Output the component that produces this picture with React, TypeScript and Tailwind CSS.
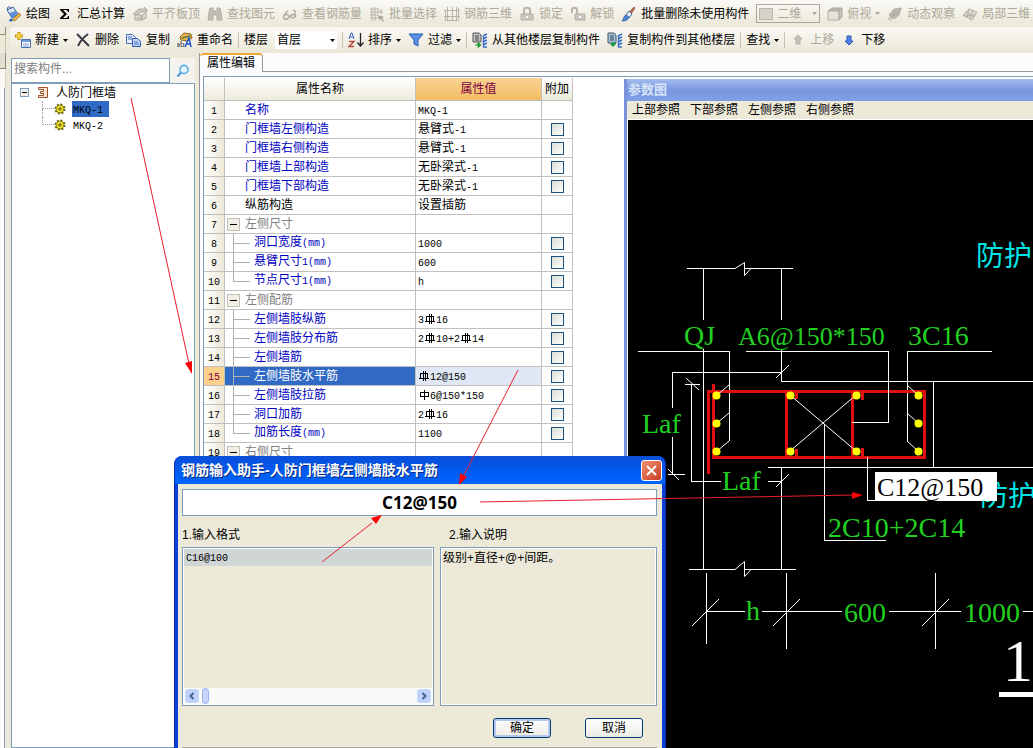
import { Fragment, useState } from 'react'
import type { ReactNode } from 'react'

interface Row {
  name: string
  value: string
  kind: 'plain' | 'dark' | 'group' | 'child'
  last?: boolean
  check?: boolean
}

// {A} and {C} stand for the rebar grade symbols
const ROWS: Row[] = [
  { name: '名称', value: 'MKQ-1', kind: 'plain' },
  { name: '门框墙左侧构造', value: '悬臂式-1', kind: 'plain', check: true },
  { name: '门框墙右侧构造', value: '悬臂式-1', kind: 'plain', check: true },
  { name: '门框墙上部构造', value: '无卧梁式-1', kind: 'plain', check: true },
  { name: '门框墙下部构造', value: '无卧梁式-1', kind: 'plain', check: true },
  { name: '纵筋构造', value: '设置插筋', kind: 'dark' },
  { name: '左侧尺寸', value: '', kind: 'group' },
  { name: '洞口宽度(mm)', value: '1000', kind: 'child', check: true },
  { name: '悬臂尺寸1(mm)', value: '600', kind: 'child', check: true },
  { name: '节点尺寸1(mm)', value: 'h', kind: 'child', check: true, last: true },
  { name: '左侧配筋', value: '', kind: 'group' },
  { name: '左侧墙肢纵筋', value: '3{C}16', kind: 'child', check: true },
  { name: '左侧墙肢分布筋', value: '2{C}10+2{C}14', kind: 'child', check: true },
  { name: '左侧墙筋', value: '', kind: 'child', check: true },
  { name: '左侧墙肢水平筋', value: '{C}12@150', kind: 'child', check: true },
  { name: '左侧墙肢拉筋', value: '{A}6@150*150', kind: 'child', check: true },
  { name: '洞口加筋', value: '2{C}16', kind: 'child', check: true },
  { name: '加筋长度(mm)', value: '1100', kind: 'child', check: true, last: true },
  { name: '右侧尺寸', value: '', kind: 'group' },
]

const NAME_COLOR = {
  plain: 'text-[#0000c0]',
  child: 'text-[#0000c0]',
  dark: 'text-black',
  group: 'text-[#808080]',
}

function Rebar({ grade }: { grade: string }) {
  return (
    <svg width="12" height="12" viewBox="0 0 12 12" className="inline-block align-[-2px]" fill="none" stroke="currentColor" shapeRendering="crispEdges">
      {grade === 'C' ? (
        <path d="M2.5 3.5h7v5h-7zM1 8.5h10M5.5 1v10M7.5 1v10" />
      ) : (
        <path d="M2.5 3.5h8v4h-8zM6.5 1v10" />
      )}
    </svg>
  )
}

function Mixed({ text }: { text: string }) {
  return (
    <>
      {text.split(/(\{[AC]\}|[!-z]+)/).map((part, i) => {
        if (part === '{A}' || part === '{C}') return <Rebar key={i} grade={part[1]} />
        if (/^[!-~]+$/.test(part)) return <span key={i} className="font-['Liberation_Mono',monospace] text-[10px]">{part}</span>
        return <Fragment key={i}>{part}</Fragment>
      })}
    </>
  )
}

function Caret() {
  return (
    <svg width="5" height="3" viewBox="0 0 5 3" fill="currentColor" className="shrink-0">
      <path d="M0 0h5L2.5 3z" />
    </svg>
  )
}

function Tool({ icon, label, off, menu }: { icon?: ReactNode; label: string; off?: boolean; menu?: boolean }) {
  return (
    <button disabled={off} className={`flex items-center gap-1 shrink-0 whitespace-nowrap ${off ? 'text-[#aca899]' : 'text-black'}`}>
      {icon && <svg width="16" height="16" viewBox="0 0 16 16" fill="none" className="shrink-0">{icon}</svg>}
      {label}
      {menu && <Caret />}
    </button>
  )
}

function Sep() {
  return <div className="w-px h-4 -mx-0.5 bg-[#c5c2b2] shrink-0" />
}

const ICONS = {
  paint: (
    <>
      <path d="M1 4l6-3 5 7-6 4z" fill="#dce9f8" stroke="#35589a" />
      <path d="M2 4C0 1 4-1 5 3" stroke="#35589a" />
      <path d="M3 7l7-2 2 3-6 4z" fill="#5d8fd6" />
      <path d="M6 14l7-7 2 2-6 6z" fill="#f0b541" stroke="#8b6d2d" strokeWidth=".7" />
      <path d="M3 15c1-3 3-3 4-1-1 2-3 2-4 1z" fill="#3467b8" />
    </>
  ),
  sigma: <path d="M3 3h9v3h-1c0-1-1-2-2-2H6l4 4-4 4h3c1 0 2-1 2-2h1v3H3v-1l4-4-4-4z" fill="#000" />,
  align: (
    <>
      <path d="M1 8l6-5h8v3H9L5 9z" fill="#c8c6bc" stroke="#b4b1a4" />
      <path d="M3 9h7v5H3zM10 9l4-2v5l-4 2z" fill="#dedcd2" stroke="#aca899" />
      <path d="M5 12h4M12 1l2 2" stroke="#aca899" />
    </>
  ),
  binoculars: (
    <path d="M3 2h3v3h4V2h3l1 4 1 8h-5v-5H6v5H1l1-8z" fill="#c0beb4" stroke="#b4b1a4" />
  ),
  glasses: (
    <path d="M6.500 10c0-2-5-2-5 1s5 3 5 0l2-1c0-2 5-2 5 0s-5 3-5 0M13 10V5l-2-1M2 9l4-4" stroke="#aca899" strokeWidth="1.300" />
  ),
  batch: (
    <>
      <path d="M1 3h9M1 6h13M1 9h8M1 12h8M3 1v14M6 1v14M9 3v5M12 3v5" stroke="#b8b5a8" />
      <path d="M9 9l6 2-2 1 2 3-1 1-2-3-2 1z" fill="#aca899" />
    </>
  ),
  mesh: <path d="M0 4.500h16M0 10.500h16M1 14.500h14M3.500 1v13M8.500 1v13M12.500 1v14M1.500 4v11M14.500 2v11" stroke="#b8b5a8" />,
  lock: (
    <>
      <path d="M5 8V4c0-3 6-3 6 0v4" stroke="#b8b5a8" strokeWidth="2" />
      <path d="M2 8h12v6H2z" fill="#c8c6bc" stroke="#b4b1a4" />
      <path d="M8 10v2" stroke="#fff" strokeWidth="2" />
    </>
  ),
  unlock: (
    <>
      <path d="M2 7V4c0-3 5-3 5 0v4" stroke="#b8b5a8" strokeWidth="2" />
      <path d="M5 8h10v6H5z" fill="#c8c6bc" stroke="#b4b1a4" />
      <path d="M10 10v2" stroke="#fff" strokeWidth="2" />
    </>
  ),
  brush: (
    <>
      <path d="M8 6l5-5 1 1-4 6z" fill="#c46a4a" stroke="#7a3c2c" strokeWidth=".6" />
      <path d="M5 9l3-4 3 3-3 4z" fill="#e5edf8" stroke="#44619c" />
      <path d="M1 15c2-1 1-5 4-6l3 2c-1 3-3 4-7 4z" fill="#4f84d8" stroke="#29509c" strokeWidth=".7" />
    </>
  ),
  cube: (
    <>
      <path d="M1 5l4-3h10l-3 3z" fill="#b8b6ac" stroke="#aca899" />
      <path d="M1 5h11v9H1z" fill="#e4e2da" stroke="#b4b1a4" />
      <path d="M12 5l3-3v9l-3 3z" fill="#c8c6bc" stroke="#aca899" />
    </>
  ),
  orbit: (
    <>
      <path d="M2 9l5-6 7-1-2 7-5 4z" fill="#bdbbb1" stroke="#b4b1a4" />
      <path d="M1 14C1 9 14 10 14 2M3 15l2-4M4 11l6-6" stroke="#aca899" />
    </>
  ),
  local: (
    <>
      <path d="M1 9l6-6 8 3-5 8z" fill="#dddbd2" stroke="#b4b1a4" />
      <path d="M4 6l8 5M7 3L5 12M11 4L8 13M2 10l11-1" stroke="#b4b1a4" />
    </>
  ),
  create: (
    <>
      <path d="M4 0v8M0 4h8" stroke="#c09018" strokeWidth="3" />
      <path d="M4 1v6M1 4h6" stroke="#ffe040" strokeWidth="1.500" />
      <path d="M6.500 7.500h9v8h-9z" fill="#fff" stroke="#4a70b0" />
      <path d="M7 8h8v2H7z" fill="#6f9be0" />
      <path d="M8 12h6M8 14h6" stroke="#7d9cd0" />
    </>
  ),
  remove: <path d="M2 2l12 12M13 2C9 5 5 9 3 14" stroke="#3b3b46" strokeWidth="2" />,
  copy: (
    <>
      <path d="M.5 2.500h6l3 3v6h-9z" fill="#e2ebfb" stroke="#4a6fc0" />
      <path d="M6.500 6.500h5l3 3v5h-8z" fill="#c2d6f8" stroke="#3358b0" />
      <path d="M2 5h4M2 7h4M8 10h4M8 12h5" stroke="#4a6fc0" />
    </>
  ),
  rename: (
    <>
      <path d="M3 5l4-4 7 1 1 4-5 3-6-1z" fill="#eab651" stroke="#8a6420" />
      <path d="M5 6l8-2" stroke="#567a38" strokeWidth="1.500" />
      <text x="-1" y="15" fontSize="9" fill="#222" fontFamily="Liberation Serif">ab</text>
      <path d="M8 15l4-9 2 9M9 12h5" stroke="#2458c8" strokeWidth="1.500" />
    </>
  ),
  sort: (
    <>
      <path d="M1 7l2-6h1l2 6M2 5h3" stroke="#3a62c4" />
      <path d="M1 9.500h5l-5 5h5" stroke="#b8453a" strokeWidth="1.300" />
      <path d="M12.500 1v12M9.500 10.500l3 3.500 3-3.500" stroke="#222" strokeWidth="1.300" />
    </>
  ),
  filter: (
    <path d="M1 2h14L10 8v6l-4-2V8z" fill="#5b92e8" stroke="#2c5cb4" />
  ),
  fromFloor: (
    <>
      <path d="M1 1h6l2 2v7H1z" fill="#c4c4c4" stroke="#555" />
      <path d="M3 4h4M3 6h4M3 8h4" stroke="#444" />
      <path d="M3 13h4M6 10.500l3 2.500-3 2.500z" stroke="#1f9a3a" fill="#1f9a3a" />
      <path d="M11 4l4-2M11 7l4-2M11 10l4-2M11 13l4-2M11.500 3v12M11 15h4" stroke="#3d70c8" strokeWidth="1.500" />
    </>
  ),
  toFloor: (
    <>
      <path d="M1 1h6l2 2v8H1z" fill="#a7c4de" stroke="#456" />
      <path d="M3 4h4M3 6h4M3 8h4" stroke="#345" />
      <path d="M3 12l3 3 3-3-1-2z" fill="#1f9a3a" />
      <path d="M11 4l4-2M11 7l4-2M11 10l4-2M11 13l4-2M11.500 3v12M11 15h4" stroke="#3d70c8" strokeWidth="1.500" />
    </>
  ),
  up: <path d="M8 3l4 4h-2v5H6V7H4z" fill="#c4c2b8" stroke="#b4b2a8" />,
  down: <path d="M8 13l4-4h-2V4H6v5H4z" fill="#4f80ea" stroke="#2a54b8" />,
}

function MainToolbar() {
  return (
    <header className="flex items-center shrink-0 gap-[7px] h-[27px] pl-1.5 overflow-hidden bg-linear-to-b from-[#faf9f5] to-[#ebe7d8]">
      <Tool icon={ICONS.paint} label="绘图" />
      <Tool icon={ICONS.sigma} label="汇总计算" />
      <Tool icon={ICONS.align} label="平齐板顶" off />
      <Tool icon={ICONS.binoculars} label="查找图元" off />
      <Tool icon={ICONS.glasses} label="查看钢筋量" off />
      <Tool icon={ICONS.batch} label="批量选择" off />
      <Tool icon={ICONS.mesh} label="钢筋三维" off />
      <Tool icon={ICONS.lock} label="锁定" off />
      <Tool icon={ICONS.unlock} label="解锁" off />
      <Tool icon={ICONS.brush} label="批量删除未使用构件" />
      <div className="flex items-center shrink-0 w-[64px] h-[19px] px-0.5 gap-1 border border-[#aca899] text-[#aca899]">
        <div className="w-3.5 h-3 shrink-0 border border-[#bab7aa] bg-[#d6d4ca]" />
        <select aria-label="视图" disabled className="appearance-none flex-1 min-w-0 opacity-100">
          <option>二维</option>
        </select>
        <Caret />
      </div>
      <Tool icon={ICONS.cube} label="俯视" off menu />
      <Tool icon={ICONS.orbit} label="动态观察" off />
      <Tool icon={ICONS.local} label="局部三维" off />
    </header>
  )
}

function ComponentToolbar() {
  return (
    <div className="flex items-center shrink-0 gap-[7px] h-[26px] pl-[5px] overflow-hidden rounded-l bg-linear-to-b from-[#faf9f5] to-[#ebe7d8]">
      <Tool icon={ICONS.create} label="新建" menu />
      <Tool icon={ICONS.remove} label="删除" />
      <Tool icon={ICONS.copy} label="复制" />
      <Tool icon={ICONS.rename} label="重命名" />
      <Sep />
      <label htmlFor="floor" className="shrink-0">楼层</label>
      <div className="flex items-center shrink-0 w-[62px] h-[18px] px-0.5 bg-white">
        <select id="floor" className="appearance-none flex-1 min-w-0">
          <option>首层</option>
        </select>
        <Caret />
      </div>
      <Sep />
      <Tool icon={ICONS.sort} label="排序" menu />
      <Tool icon={ICONS.filter} label="过滤" menu />
      <Sep />
      <Tool icon={ICONS.fromFloor} label="从其他楼层复制构件" />
      <Tool icon={ICONS.toFloor} label="复制构件到其他楼层" />
      <Sep />
      <Tool label="查找" menu />
      <Sep />
      <Tool icon={ICONS.up} label="上移" off />
      <Tool icon={ICONS.down} label="下移" />
    </div>
  )
}

function Gear() {
  return (
    <svg width="12" height="12" viewBox="0 0 12 12" className="shrink-0">
      <circle cx="6" cy="6" r="4.500" fill="#f2e230" stroke="#5c5414" strokeWidth="2" strokeDasharray="1.800 1.734" />
      <circle cx="6" cy="6" r="3.800" fill="#f8ec30" stroke="#6b6010" strokeWidth=".7" />
      <circle cx="6" cy="6" r="1.200" fill="none" stroke="#4c4410" />
    </svg>
  )
}

function ComponentTree() {
  const [picked, setPicked] = useState('MKQ-1')
  return (
    <aside className="w-[184px] shrink-0 flex flex-col pt-[5px]">
      <div className="flex h-[25px]">
        <input
          aria-label="搜索构件"
          placeholder="搜索构件..."
          className="flex-1 min-w-0 px-0.5 pb-1 bg-white border border-[#7f9db9] placeholder:text-[#808080] outline-none"
        />
        <button aria-label="搜索" className="w-[25px] flex items-center justify-center bg-[#f4f3ee]">
          <svg width="14" height="14" viewBox="0 0 14 14" fill="none">
            <circle cx="8" cy="5.500" r="4" fill="#e8f6ff" stroke="#6cb4e4" strokeWidth="1.800" />
            <path d="M5 8.500L1.500 12.500" stroke="#4d9cd8" strokeWidth="2.200" />
          </svg>
        </button>
      </div>
      <div className="flex-1 bg-white border border-[#7f9db9] pl-2">
        <div className="flex items-center h-[17px]">
          <button aria-label="折叠" className="w-[9px] h-[9px] border border-[#7b9ebd] bg-[#f4f2ea] flex items-center justify-center">
            <span className="w-[5px] h-px bg-black" />
          </button>
          <svg width="12" height="13" viewBox="0 0 12 13" fill="none" className="ml-2">
            <path d="M1.500 1.500h9v10h-9v-2h5v-2h-3v-2h3v-2h-5z" fill="#fbe3cc" stroke="#a0522d" />
          </svg>
          <span className="ml-[7px]">人防门框墙</span>
        </div>
        {['MKQ-1', 'MKQ-2'].map((id, i) => (
          <div key={id} className="flex items-center h-4 pl-[22px]">
            <div className="w-3 h-full shrink-0 flex flex-col">
              <div className="h-2 border-l border-b border-dotted border-[#a0a0a0]" />
              {i === 0 && <div className="h-2 border-l border-dotted border-[#a0a0a0]" />}
            </div>
            <Gear />
            <button
              onClick={() => setPicked(id)}
              className={`ml-1.5 pl-px h-4 w-[37px] text-left leading-4 ${picked === id ? 'bg-[#316ac5]' : ''}`}
            >
              <Mixed text={id} />
            </button>
          </div>
        ))}
      </div>
    </aside>
  )
}

function Branch({ row }: { row: Row }) {
  if (row.kind === 'group') {
    return (
      <button aria-label="折叠" className="ml-0.5 mr-[5px] w-[13px] h-[13px] shrink-0 border border-[#c4c1b4] bg-[#f1efe7] flex items-center justify-center">
        <span className="w-[7px] h-px bg-black" />
      </button>
    )
  }
  if (row.kind === 'child') {
    return (
      <svg width="29" height="18" viewBox="0 0 29 18" className="shrink-0" stroke="#b0b0b0" shapeRendering="crispEdges">
        <path d={row.last ? 'M8.500 0v9M8 9.500h17' : 'M8.500 0v18M8 9.500h17'} fill="none" />
      </svg>
    )
  }
  return <span className="w-5 shrink-0" />
}

function PropertyTable() {
  const [selected, setSelected] = useState(14)
  return (
    <table className="table-fixed border-separate border-spacing-0 w-[369px]">
      <colgroup>
        <col className="w-[21px]" />
        <col className="w-[191px]" />
        <col className="w-[126px]" />
        <col className="w-[31px]" />
      </colgroup>
      <thead>
        <tr className="h-[23px] bg-linear-to-b from-white to-[#ece9d8]">
          <th className="border-r border-b border-[#c0c0c0]" />
          <th className="border-r border-b border-[#c0c0c0] font-normal">属性名称</th>
          <th className="border-r border-b border-[#c0c0c0] font-normal text-[#800040] bg-linear-to-b from-[#f9d293] to-[#f2bd60]">属性值</th>
          <th className="border-r border-b border-[#c0c0c0] font-normal whitespace-nowrap">附加</th>
        </tr>
      </thead>
      <tbody>
        {ROWS.map((row, i) => {
          const on = i === selected
          return (
            <tr key={i} onClick={() => setSelected(i)}>
              <td className={`border-r border-b border-[#c0c0c0] text-center ${on ? 'bg-[#fbd08a] text-[#800040]' : 'bg-linear-to-r from-white to-[#ece9d8]'}`}>
                <div className="h-[18px] leading-[18px]"><Mixed text={String(i + 1)} /></div>
              </td>
              <td className={`border-r border-b border-[#c0c0c0] ${on ? 'bg-[#316ac5] text-white' : NAME_COLOR[row.kind]}`}>
                <div className="flex items-center h-[18px] leading-[18px] whitespace-nowrap">
                  <Branch row={row} />
                  <span><Mixed text={row.name} /></span>
                </div>
              </td>
              <td className={`border-r border-b border-[#c0c0c0] ${on ? 'bg-[#e0e8f6]' : ''}`}>
                <div className="h-[18px] leading-[18px] pl-0.5 whitespace-nowrap"><Mixed text={row.value} /></div>
              </td>
              <td className="border-r border-b border-[#c0c0c0]">
                {row.check && (
                  <input
                    type="checkbox"
                    aria-label={row.name}
                    className="block mx-auto appearance-none w-[13px] h-[13px] border border-[#1c5180] bg-linear-to-br from-[#dcdcd7] to-white checked:bg-[#21a121]"
                  />
                )}
              </td>
            </tr>
          )
        })}
      </tbody>
    </table>
  )
}

// Section detail of the door frame wall
function Drawing() {
  const dots = [
    [716, 395], [716, 423], [716, 451], [790, 395], [790, 451],
    [856, 395], [856, 451], [918, 395], [918, 423], [918, 451],
  ]
  return (
    <svg className="block w-full h-full" fill="none">
      <g transform="translate(-628 -120)">
        <g stroke="#fff" shapeRendering="crispEdges">
          <path d="M687 268.500h48M744 268.500h49M703.500 268v52M781.500 268v52M703.500 349v220M781.500 349v32M781.500 467v103" />
          <path d="M638 351.500h91.500V441M746 351.500h142.500V422.500H852M992 351.500h-84.500V441" />
          <path d="M672.500 408V372.500H781M672.500 437V474M668 474.500h17M691.500 384V481.500H721M685 384.500h15M768 481.500h13" />
          <path d="M781 381.500h1000M933.500 381v86M768 467.500h1000" />
          <path d="M689 569.500h46M744 569.500h52M706.500 573v71M786.500 573v76M935.500 573v76" />
          <path d="M706 611.500h39M762 611.500h80M889 611.500h72M1023 611.500h60" />
        </g>
        <g stroke="#fff">
          <path d="M735 268.500l9.500-6v13l6.500-7M735 569.500l9.500-8v15l6.500-7" />
          <path d="M776 378l13-13M776 487l13-13M668 469l11 11M686 378l13 12" />
          <path d="M692 626l27-27M773 626l27-27M922 626l27-27" />
        </g>
        <g stroke="#e01010" strokeWidth="3" shapeRendering="crispEdges">
          <path d="M708.500 474V391.500H924.500V457.500H713.500V384" />
          <path d="M786.500 391v66M852.500 391v66M796.500 391v8M796.500 449v8M862.500 391v9M862.500 448v9" />
        </g>
        <g stroke="#fff">
          <path d="M729 385l-13 11M729 413l-12 10M729 441l-13 11M907 385l11 10M907 413l11 10M907 441l11 10" />
          <path d="M790 395l66 56M790 451l66-56" />
          <path d="M824.500 424v116.500H886M852 422.500h36.500V380M867.500 457v43.500H875" shapeRendering="crispEdges" />
        </g>
        {dots.map(([x, y]) => <circle key={`${x}-${y}`} cx={x + 0.5} cy={y + 0.5} r="4" fill="#ff0" />)}

        <g className="font-['Liberation_Serif','Noto_Sans_CJK_SC',serif] text-[28px]" fill="#22d022">
          <text x="684" y="345">QJ</text>
          <text x="738" y="345" className="text-[26px]">A6@150*150</text>
          <text x="908" y="345">3C16</text>
          <text x="642" y="433">Laf</text>
          <text x="722" y="490">Laf</text>
          <text x="828" y="537">2C10+2C14</text>
          <text x="746" y="620">h</text>
          <text x="844" y="622">600</text>
          <text x="964" y="622">1000</text>
        </g>
        <g className="font-['Noto_Sans_CJK_SC',sans-serif] text-[28px]" fill="#00e4e4">
          <text x="976" y="266">防护</text>
          <text x="980" y="506">防护</text>
        </g>
        <rect x="875" y="472" width="122" height="29" fill="#fff" />
        <text x="877" y="496" className="font-['Liberation_Serif',serif] text-[26px]" fill="#000">C12@150</text>
        <text x="1003" y="681" className="font-['Liberation_Serif',serif] text-[60px]" fill="#fff">1</text>
        <path d="M999 694.500h100" stroke="#fff" strokeWidth="5" />
      </g>
    </svg>
  )
}

function ParamWindow() {
  return (
    <section className="flex-1 min-w-0 flex flex-col mt-0.5 border-l-[3px] border-[#7b91dc] bg-[#7a96df]">
      <h2 className="h-[22px] leading-[22px] pl-px text-[13px] font-bold text-[#d8e4f8] bg-linear-to-b from-[#a5bdf0] via-[#7a96df] to-[#7fa0e6]">参数图</h2>
      <nav className="flex gap-2.5 h-[19px] px-[5px] bg-[#ece9d8] border-b border-white whitespace-nowrap overflow-hidden">
        {['上部参照', '下部参照', '左侧参照', '右侧参照'].map((label) => (
          <button key={label}>{label}</button>
        ))}
      </nav>
      <div className="flex-1 min-h-0 bg-black border-l border-white">
        <Drawing />
      </div>
    </section>
  )
}

function PropertyPanel() {
  return (
    <main className="flex-1 min-w-0 flex flex-col bg-[#fcfcfe] border-l border-[#919b9c]">
      <div className="flex h-[19px]">
        <button className="w-[63px] bg-[#fcfcfe] border-t-2 border-[#f0a830] border-r border-r-[#919b9c] leading-[17px] rounded-t-sm">属性编辑</button>
        <div className="flex-1 border-b border-[#919b9c]" />
      </div>
      <div className="flex-1 min-h-0 flex mt-1 ml-[3px] border-t border-l border-[#7f9db9] bg-white">
        <div className="w-[420px] shrink-0 overflow-hidden pt-px">
          <PropertyTable />
        </div>
        <ParamWindow />
      </div>
    </main>
  )
}

const FRAME = 'border border-[#7f9db9] bg-[#ece9d8] outline-1 -outline-offset-2 outline-white'
const XP_BUTTON = 'w-[58px] h-5 leading-[18px] rounded-[3px] border border-[#003c74] bg-linear-to-b from-white to-[#ecebe5]'
const ARROW_BUTTON = 'w-4 h-4 flex items-center justify-center rounded-sm border border-white bg-[#c1d3fb] text-[#4d6185]'

function RebarDialog() {
  const [value, setValue] = useState('C12@150')
  return (
    <div role="dialog" aria-labelledby="dialog-title" className="absolute left-[174px] top-[456px] w-[492px] h-[296px] flex flex-col rounded-t-lg bg-[#0a3fd8] border-x border-[#0a2fb0] overflow-hidden">
      <div className="flex items-center h-7 shrink-0 pl-1.5 pr-[3px] bg-linear-to-b from-[#0a4fd8] via-[#0058ee] to-[#0066ff]">
        <h1 id="dialog-title" className="flex-1 text-sm font-bold text-white [text-shadow:1px_1px_#0a2a80]">钢筋输入助手-人防门框墙左侧墙肢水平筋</h1>
        <button aria-label="关闭" className="w-[21px] h-[21px] rounded-[3px] border border-white bg-linear-to-br from-[#f09070] to-[#c8381c] flex items-center justify-center">
          <svg width="13" height="13" viewBox="0 0 13 13" stroke="#fff" strokeWidth="2">
            <path d="M2 2l9 9M11 2l-9 9" />
          </svg>
        </button>
      </div>
      <div className="flex-1 flex flex-col mx-[3px] pl-1 pr-[5px] pt-[5px] bg-[#ece9d8]">
        <input
          aria-label="钢筋"
          value={value}
          onChange={(e) => setValue(e.target.value)}
          className="w-full h-[27px] shrink-0 border border-[#7f9db9] bg-white text-center font-['Noto_Sans',sans-serif] font-bold text-[17px] outline-none"
        />
        <div className="flex gap-1.5 mt-2.5">
          <section className="w-[252px]">
            <h3 className="h-[21px] leading-[18px]">1.输入格式</h3>
            <div className={`h-[159px] p-px flex flex-col justify-between ${FRAME}`}>
              <div className="h-[17px] leading-[17px] pl-0.5 bg-[#d0d5d5]"><Mixed text="C16@100" /></div>
              <div className="flex h-4 bg-[#fafafa]">
                <button aria-label="左" className={ARROW_BUTTON}>
                  <svg width="8" height="8" viewBox="0 0 8 8" fill="none" stroke="currentColor" strokeWidth="2"><path d="M5.500 1l-3 3 3 3" /></svg>
                </button>
                <div className="ml-0.5 w-[7px] rounded-sm border border-[#98b4f0] bg-[#c8d6fb]" />
                <div className="flex-1" />
                <button aria-label="右" className={ARROW_BUTTON}>
                  <svg width="8" height="8" viewBox="0 0 8 8" fill="none" stroke="currentColor" strokeWidth="2"><path d="M2.500 1l3 3-3 3" /></svg>
                </button>
              </div>
            </div>
          </section>
          <section className="flex-1">
            <h3 className="h-[21px] leading-[18px] pl-[9px]">2.输入说明</h3>
            <p className={`h-[159px] pl-0.5 pt-0.5 ${FRAME}`}>级别+直径+@+间距。</p>
          </section>
        </div>
        <div className="flex justify-end gap-[34px] mt-3 pr-3.5">
          <button className={`${XP_BUTTON} shadow-[inset_0_0_0_2px_#b5c9ee]`}>确定</button>
          <button className={XP_BUTTON}>取消</button>
        </div>
        <div className="mt-[9px] border-t border-[#aca899]" />
      </div>
    </div>
  )
}

function Arrows() {
  return (
    <svg className="absolute inset-0 w-full h-full pointer-events-none" stroke="#e8202c" fill="#f00">
      <path d="M131 98l58 266M518 370l-54 105M322 562l50-39M480 502l374-7" fill="none" />
      <path d="M192 374l-7-11 7-2zM459 485l1-12 7 4zM382 515l-6 9-5-6zM863 495l-11 4v-7z" stroke="none" />
    </svg>
  )
}

// Right edge of the docked module bar
function DockEdge() {
  return (
    <div className="w-1.5 mr-1 shrink-0 flex flex-col">
      <div className="h-2 border-r border-b border-[#8c897a]" />
      <div className="h-[18px] border-r border-[#c5c2b2]" />
      <div className="h-4 border-r border-b border-[#8c897a] bg-[#e2dfd0]" />
      <div className="h-[19px] border-r border-[#d8d5c8] bg-[#faf9f5]" />
      <div className="flex-1 mr-px border-r border-[#9a96b8] bg-[#fcfcfe]" />
    </div>
  )
}

export default function App() {
  return (
    <div className="relative h-screen flex flex-col overflow-hidden bg-[#ece9d8] text-black text-xs font-['Liberation_Sans','Noto_Sans_CJK_SC',sans-serif]">
      <MainToolbar />
      <div className="flex-1 min-h-0 flex">
        <DockEdge />
        <div className="flex-1 min-w-0 flex flex-col">
          <ComponentToolbar />
          <div className="flex-1 min-h-0 flex pl-px gap-1">
            <ComponentTree />
            <PropertyPanel />
          </div>
        </div>
      </div>
      <RebarDialog />
      <Arrows />
    </div>
  )
}
